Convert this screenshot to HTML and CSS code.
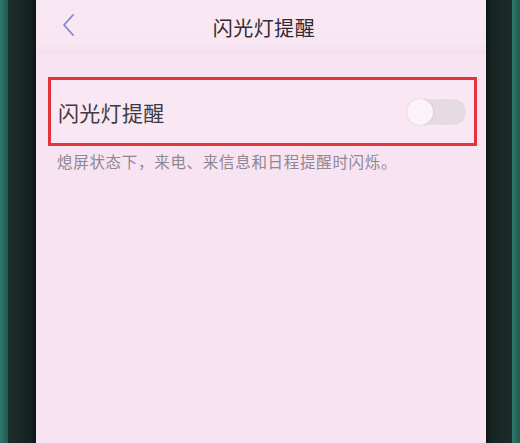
FILE: index.html
```html
<!DOCTYPE html>
<html lang="zh-CN">
<head>
<meta charset="utf-8">
<title>闪光灯提醒</title>
<link rel="stylesheet" href="styles.css">
</head>
<body>
<div class="stage">
  <div class="edge"></div>
  <div class="bezel bezel-left"></div>
  <main class="screen">
    <header class="topbar">
      <svg class="back" width="14" height="24" viewBox="0 0 14 24" aria-hidden="true">
        <path d="M12 2 L3 12 L12 22" fill="none" stroke="#8486cc" stroke-width="1.8" stroke-linecap="round" stroke-linejoin="round"/>
      </svg>
      <h1 class="title">闪光灯提醒</h1>
    </header>
    <section class="group">
      <div class="row highlight">
        <span class="label">闪光灯提醒</span>
        <span class="switch"><span class="knob"></span></span>
      </div>
      <p class="hint">熄屏状态下，来电、来信息和日程提醒时闪烁。</p>
    </section>
  </main>
  <div class="bezel bezel-right"></div>
  <div class="edge"></div>
</div>
</body>
</html>
```

FILE: styles.css
```css
html, body {
  margin: 0;
  padding: 0;
  height: 100%;
}

body {
  font-family: "Noto Sans CJK SC", "Noto Sans", sans-serif;
  background: #2f6f64;
}

.stage {
  display: flex;
  height: 443px;
  width: 520px;
}

.edge {
  width: 8px;
  background: linear-gradient(90deg, #2f7a6c, #245a50);
}

.bezel {
  background: #172523;
}

.bezel-left {
  width: 28px;
  background: linear-gradient(90deg, #1c2e2b, #142220 80%, #0c1413);
}

.bezel-right {
  width: 26px;
  background: linear-gradient(90deg, #0c1413, #162523 20%, #1b2c29);
}

.screen {
  flex: 1;
  background: #f7e3f1;
  display: flex;
  flex-direction: column;
}

.topbar {
  position: relative;
  height: 54px;
  display: flex;
  align-items: center;
  justify-content: center;
  background: linear-gradient(180deg, #f8e8f4 0%, #f8e7f3 80%, #f1dfec 100%);
}

.back {
  position: absolute;
  left: 25px;
  top: 13px;
}

.title {
  margin: 0;
  font-size: 20px;
  font-weight: 400;
  color: #2e2b31;
  letter-spacing: 0.5px;
  padding-left: 6px;
}

.group {
  padding: 23px 9px 0 12px;
}

.row {
  display: flex;
  align-items: center;
  justify-content: space-between;
  height: 63px;
  padding: 0 8px 0 7px;
  border: 3px solid #e2343b;
  background: #f9e8f4;
}

.label {
  font-size: 21px;
  color: #3d3a40;
  letter-spacing: 0.3px;
}

.switch {
  display: flex;
  align-items: center;
  width: 59px;
  height: 26px;
  border-radius: 13px;
  background: #e6dbe3;
}

.knob {
  width: 26px;
  height: 26px;
  border-radius: 50%;
  background: #fcf2fa;
  box-shadow: 0 0 2px rgba(120, 100, 115, 0.25);
}

.hint {
  margin: 4px 0 0 9px;
  font-size: 15.5px;
  color: #8d8892;
  letter-spacing: 0.7px;
}
```
